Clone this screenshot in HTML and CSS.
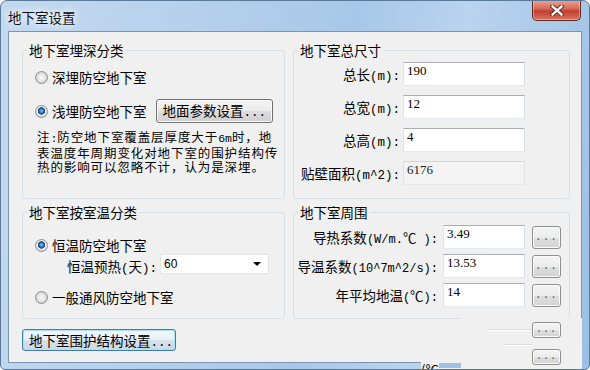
FILE: index.html
```html
<!DOCTYPE html>
<html lang="zh-CN">
<head>
  <meta charset="UTF-8">
  <title>地下室设置</title>
  <link rel="stylesheet" href="styles.css">
</head>
<body>
  <div class="window">
    <div class="titlebar">
      <span class="title">地下室设置</span>
      <button class="close" type="button">
        <svg width="14" height="11" viewBox="0 0 14 11">
          <path d="M2.5 1.5 L11.5 9.5 M11.5 1.5 L2.5 9.5" stroke="#5a1c14" stroke-width="4.2" stroke-linecap="square"/>
          <path d="M2.5 1.5 L11.5 9.5 M11.5 1.5 L2.5 9.5" stroke="#fff" stroke-width="2.4" stroke-linecap="square"/>
        </svg>
      </button>
    </div>

    <div class="client">
      <fieldset class="box">
        <legend>地下室埋深分类</legend>
        <div class="depth-body">
          <label class="radio-row"><span class="radio"></span>深埋防空地下室</label>
          <div class="radio-line">
            <label class="radio-row"><span class="radio on"></span>浅埋防空地下室</label>
            <button class="btn btn-params" type="button">地面参数设置<span class="lat">...</span></button>
          </div>
          <p class="note">注<span class="lat">:</span>防空地下室覆盖层厚度大于<span class="lat">6m</span>时，地<br>表温度年周期变化对地下室的围护结构传<br>热的影响可以忽略不计，认为是深埋。</p>
        </div>
      </fieldset>

      <fieldset class="box">
        <legend>地下室总尺寸</legend>
        <div class="form form-size">
          <label for="len">总长<span class="lat">(m):</span></label>
          <input class="field" id="len" type="text" value="190">
          <label for="wid">总宽<span class="lat">(m):</span></label>
          <input class="field" id="wid" type="text" value="12">
          <label for="hgt">总高<span class="lat">(m):</span></label>
          <input class="field" id="hgt" type="text" value="4">
          <label for="area">贴壁面积<span class="lat">(m^2):</span></label>
          <input class="field field-off" id="area" type="text" value="6176" readonly>
        </div>
      </fieldset>

      <fieldset class="box">
        <legend>地下室按室温分类</legend>
        <div class="temp-body">
          <label class="radio-row short"><span class="radio on"></span>恒温防空地下室</label>
          <div class="preheat">
            <span class="preheat-label">恒温预热<span class="lat">(</span>天<span class="lat">):</span></span>
            <div class="combo">
              <span>60</span>
              <svg width="8" height="4" viewBox="0 0 8 4"><path d="M0 0h8L4 4z" fill="#000"/></svg>
            </div>
          </div>
          <label class="radio-row gap-top"><span class="radio"></span>一般通风防空地下室</label>
        </div>
      </fieldset>

      <fieldset class="box">
        <legend>地下室周围</legend>
        <div class="form form-soil">
          <label for="k">导热系数<span class="lat">(W/m.</span>℃<span class="lat"> ):</span></label>
          <input class="field" id="k" type="text" value="3.49">
          <button class="dots" type="button">...</button>
          <label for="a">导温系数<span class="lat">(10^7m^2/s):</span></label>
          <input class="field" id="a" type="text" value="13.53">
          <button class="dots" type="button">...</button>
          <label for="t">年平均地温<span class="lat">(</span>℃<span class="lat">):</span></label>
          <input class="field" id="t" type="text" value="14">
          <button class="dots" type="button">...</button>
        </div>
      </fieldset>

      <button class="btn btn-default" type="button">地下室围护结构设置<span class="lat">...</span></button>
    </div>

    <!-- redraw leftovers over the bottom right corner -->
    <div class="ghost">
      <div class="ghost-row">
        <span class="ghost-line"></span>
        <button class="dots small" type="button">...</button>
      </div>
      <div class="ghost-row low">
        <span class="ghost-line short"></span>
        <button class="dots small" type="button">...</button>
      </div>
    </div>
    <div class="ghost-text">(℃<i class="ghost-bar"></i>):</div>
  </div>
</body>
</html>
```

FILE: styles.css
```css
body {
  margin: 0;
  font-family: "Noto Sans CJK SC", sans-serif;
  font-size: 13.5px;
  color: #000;
  background: #fff;
}

.window {
  box-sizing: border-box;
  width: 590px;
  height: 370px;
  border: 1px solid #5b7a99;
  border-radius: 7px 7px 5px 5px;
  padding: 0 7px 6px;
  background: linear-gradient(100deg, #c3d9f0 0%, #b6d0ec 30%, #a8c7e8 55%, #bad3ee 72%, #9cbfe4 100%);
  position: relative;
  display: flex;
  flex-direction: column;
  overflow: hidden;
}

.titlebar {
  box-sizing: border-box;
  height: 30px;
  padding-top: 2px;
  display: flex;
  align-items: center;
}

.title {
  line-height: 16px;
  color: #111;
  text-shadow: 0 0 6px #fff, 0 0 10px #fff;
}

.close {
  position: absolute;
  top: -1px;
  right: 8px;
  width: 49px;
  height: 21px;
  padding: 0;
  border: 1px solid #5e2a24;
  border-top: none;
  border-radius: 0 0 5px 5px;
  background: linear-gradient(#e9a898, #d56553 45%, #c13f2e 55%, #d87362);
  box-shadow: inset 0 0 0 1px rgba(255, 255, 255, 0.35);
  display: flex;
  align-items: center;
  justify-content: center;
}

.client {
  flex: 1;
  border: 1px solid #7c94ad;
  background: #f0f0f0;
  padding: 10px 11px 0 13px;
  display: grid;
  grid-template-columns: 263px 277px;
  column-gap: 8px;
  row-gap: 5px;
  align-content: start;
}

.box {
  margin: 0;
  padding: 0;
  min-width: 0;
  border: 1px solid #d5dfe5;
  border-radius: 3px;
}

.box legend {
  margin-left: 4px;
  padding: 0 2px;
  line-height: 16px;
}

.lat {
  font-family: "Liberation Mono", monospace;
  font-size: 12.5px;
}

/* radios */
.radio-row {
  display: flex;
  align-items: center;
  gap: 4px;
  height: 20px;
  line-height: 20px;
  white-space: nowrap;
}

.radio-row.short {
  height: 18px;
}

.radio-row.gap-top {
  margin-top: 13px;
}

.radio {
  flex: none;
  box-sizing: border-box;
  width: 13px;
  height: 13px;
  border: 1px solid #8d8f91;
  border-radius: 50%;
  background: radial-gradient(circle at 50% 50%, #f6f6f6 0, #eeeeee 2.5px, #d6d6d6 5px, #c4c4c4 6px);
}

.radio.on {
  background: radial-gradient(circle at 50% 45%, #8cc8f2 0, #3a82c6 1.8px, #173f7a 3.4px, #f4f4f4 4px, #e6e6e6 5px, #c8c8c8 6px);
}

/* buttons */
.btn {
  font-family: inherit;
  font-size: 13.5px;
  color: #000;
  height: 24px;
  padding: 0 6px;
  line-height: 20px;
  border: 1px solid #707070;
  border-radius: 3px;
  background: linear-gradient(#f2f2f2, #ebebeb 50%, #dddddd 51%, #cfcfcf);
  box-shadow: inset 0 0 0 1px #fbfbfb;
  white-space: nowrap;
}

.btn-params {
  width: 117px;
}

.btn-default {
  justify-self: start;
  width: 154px;
  height: 22px;
  margin-top: 5px;
  border-color: #3c7fb1;
  box-shadow: inset 0 0 0 1px #a8e2f8;
  background: linear-gradient(#f4f8fb, #e8eff5 50%, #d8e2ea 51%, #cdd8e2);
}

.dots {
  justify-self: end;
  width: 29px;
  height: 23px;
  padding: 0;
  border: 1px solid #8e8f8f;
  border-radius: 3px;
  background: linear-gradient(#f4f4f4, #ececec 50%, #dedede 51%, #d3d3d3);
  box-shadow: inset 0 0 0 1px #fbfbfb;
  font: 11px "Liberation Mono", monospace;
  color: #555;
  letter-spacing: 1px;
}

/* depth group */
.depth-body {
  padding: 9px 0 24px 12px;
}

.radio-line {
  display: flex;
  align-items: center;
  gap: 9px;
  margin-top: 12px;
}

.note {
  margin: 7px 0 0 2px;
  font-size: 12.5px;
  letter-spacing: 0.9px;
  line-height: 14px;
  white-space: nowrap;
}

.note .lat {
  font-size: 11.5px;
  letter-spacing: 0;
}

/* forms */
.form {
  display: grid;
  align-items: center;
}

.form label {
  justify-self: end;
  white-space: nowrap;
  line-height: 18px;
  padding-top: 3px;
}

.form-size {
  grid-template-columns: minmax(0, 1fr) 122px;
  row-gap: 9px;
  padding: 4px 44px 8px 4px;
}

.form-size label {
  padding-right: 3px;
}

.form-soil {
  grid-template-columns: minmax(0, 1fr) 82px 36px;
  row-gap: 5px;
  padding: 5px 8px 8px 4px;
}

.form-soil label {
  padding-right: 5px;
}

.form-soil .lat {
  font-size: 12px;
}

.field {
  box-sizing: border-box;
  width: 100%;
  height: 24px;
  margin: 0;
  padding: 1px 3px 7px;
  border: 1px solid;
  border-color: #abadb3 #dbdfe6 #e3e9ef #e2e3ea;
  background: #fff;
  font: 13px "Liberation Serif", serif;
  color: #000;
  outline: none;
}

.field-off {
  background: #f3f3f3;
  border-color: #d6d6d6 #e2e2e2 #e6e6e6 #e2e2e2;
  color: #222;
}

/* temperature group */
.temp-body {
  padding: 16px 0 11px 12px;
}

.preheat {
  display: flex;
  align-items: center;
  height: 20px;
  margin-left: 32px;
}

.preheat-label {
  width: 93px;
  white-space: nowrap;
  padding-top: 3px;
}

.combo {
  box-sizing: border-box;
  width: 109px;
  height: 20px;
  padding: 0 7px 0 3px;
  background: #fff;
  border: 1px solid #e4e4e4;
  display: flex;
  align-items: center;
  justify-content: space-between;
  font: 12px "Liberation Sans", sans-serif;
}

/* leftovers of an unrepainted dialog */
.ghost {
  position: absolute;
  left: 459px;
  top: 317px;
  width: 122px;
  height: 53px;
  box-sizing: border-box;
  padding: 4px 21px 0 0;
  background: #f0f0f0;
  display: flex;
  flex-direction: column;
  align-items: flex-end;
  gap: 11px;
}

.ghost-row {
  display: flex;
  align-items: center;
}

.ghost-row.low {
  align-items: flex-start;
}

.ghost-line {
  width: 45px;
  height: 0;
  border-top: 1px solid #d9dde0;
  border-bottom: 1px solid #fff;
}

.ghost-line.short {
  width: 29px;
  margin-top: -5px;
}

.dots.small {
  height: 16px;
  font-size: 10px;
  line-height: 12px;
}

.ghost-text {
  position: absolute;
  left: 420px;
  top: 360px;
  width: 40px;
  height: 10px;
  overflow: hidden;
  background: #f0f0f0;
  line-height: 16px;
  white-space: nowrap;
}

.ghost-bar {
  display: inline-block;
  width: 22px;
  height: 5px;
  margin-top: 2px;
  vertical-align: top;
  background: #9fc0e4;
}
```
